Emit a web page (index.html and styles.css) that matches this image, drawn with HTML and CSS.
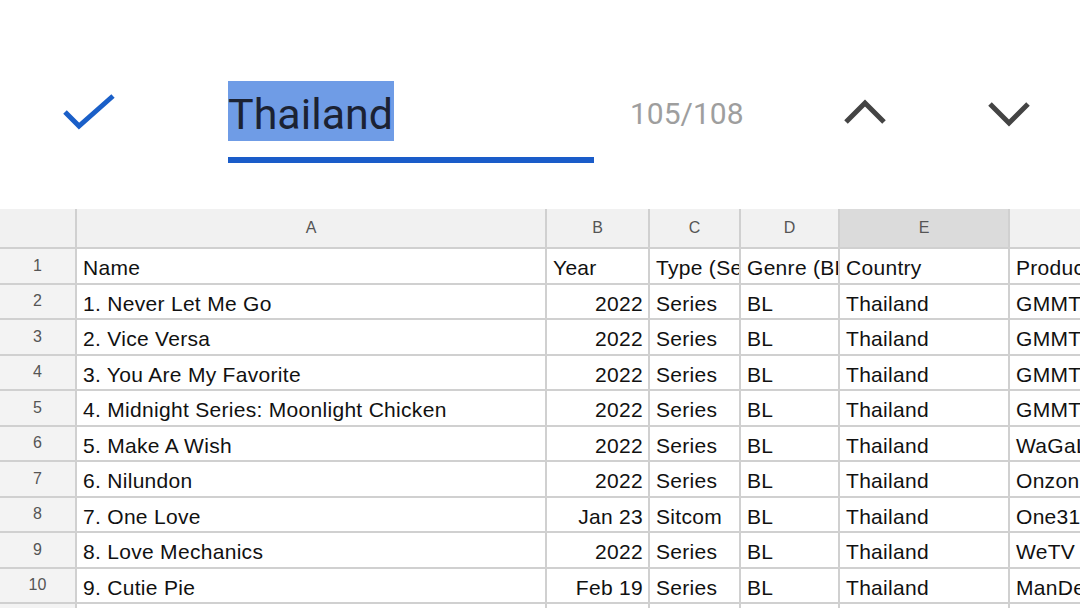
FILE: index.html
```html
<!DOCTYPE html>
<html>
<head>
<meta charset="utf-8">
<link rel="stylesheet" href="styles.css">
</head>
<body>
<div class="findbar">
  <div class="check">
    <svg width="56" height="42" viewBox="0 0 56 42"><path d="M3 19 L17 33 L51 3" fill="none" stroke="#1a5fc8" stroke-width="5"/></svg>
  </div>
  <div class="field">
    <div class="query"><span class="sel">Thailand</span></div>
    <div class="underline"></div>
  </div>
  <div class="count">105/108</div>
  <div class="nav up">
    <svg width="42" height="26" viewBox="0 0 42 26"><path d="M2 23 L21 4 L40 23" fill="none" stroke="#444" stroke-width="5"/></svg>
  </div>
  <div class="nav down">
    <svg width="42" height="26" viewBox="0 0 42 26"><path d="M2 3 L21 22 L40 3" fill="none" stroke="#444" stroke-width="5"/></svg>
  </div>
</div>
<div class="sheet">
  <div class="hd corner"></div>
  <div class="hd">A</div>
  <div class="hd">B</div>
  <div class="hd">C</div>
  <div class="hd">D</div>
  <div class="hd active">E</div>
  <div class="hd"></div>

  <div class="rn">1</div><div class="c">Name</div><div class="c">Year</div><div class="c">Type (Series/Movie)</div><div class="c">Genre (BL/GL)</div><div class="c">Country</div><div class="c">Production</div>
  <div class="rn">2</div><div class="c">1. Never Let Me Go</div><div class="c r">2022</div><div class="c">Series</div><div class="c">BL</div><div class="c">Thailand</div><div class="c">GMMTV</div>
  <div class="rn">3</div><div class="c">2. Vice Versa</div><div class="c r">2022</div><div class="c">Series</div><div class="c">BL</div><div class="c">Thailand</div><div class="c">GMMTV</div>
  <div class="rn">4</div><div class="c">3. You Are My Favorite</div><div class="c r">2022</div><div class="c">Series</div><div class="c">BL</div><div class="c">Thailand</div><div class="c">GMMTV</div>
  <div class="rn">5</div><div class="c">4. Midnight Series: Moonlight Chicken</div><div class="c r">2022</div><div class="c">Series</div><div class="c">BL</div><div class="c">Thailand</div><div class="c">GMMTV</div>
  <div class="rn">6</div><div class="c">5. Make A Wish</div><div class="c r">2022</div><div class="c">Series</div><div class="c">BL</div><div class="c">Thailand</div><div class="c">WaGaLa</div>
  <div class="rn">7</div><div class="c">6. Nilundon</div><div class="c r">2022</div><div class="c">Series</div><div class="c">BL</div><div class="c">Thailand</div><div class="c">Onzon</div>
  <div class="rn">8</div><div class="c">7. One Love</div><div class="c r">Jan 23</div><div class="c">Sitcom</div><div class="c">BL</div><div class="c">Thailand</div><div class="c">One31</div>
  <div class="rn">9</div><div class="c">8. Love Mechanics</div><div class="c r">2022</div><div class="c">Series</div><div class="c">BL</div><div class="c">Thailand</div><div class="c">WeTV</div>
  <div class="rn">10</div><div class="c">9. Cutie Pie</div><div class="c r">Feb 19</div><div class="c">Series</div><div class="c">BL</div><div class="c">Thailand</div><div class="c">ManDee</div>
  <div class="rn">11</div><div class="c">10. Bad Buddy</div><div class="c r">2021</div><div class="c">Series</div><div class="c">BL</div><div class="c">Thailand</div><div class="c">GMMTV</div>
</div>
</body>
</html>
```
FILE: styles.css
```css
html, body {
  margin: 0;
  padding: 0;
  background: #fff;
  width: 1080px;
  height: 608px;
  overflow: hidden;
}

.findbar {
  height: 209px;
  display: flex;
  align-items: flex-start;
}

.check {
  margin-left: 62px;
  margin-top: 93px;
  width: 56px;
  height: 42px;
}

.field {
  margin-left: 110px;
  margin-top: 81px;
  width: 366px;
}

.query {
  height: 60px;
  font-family: Roboto, "Noto Sans", sans-serif;
  font-size: 43px;
  color: #1b2233;
}

.sel {
  background: #6f9ce6;
  display: inline-block;
  height: 60px;
  line-height: 66px;
  overflow: hidden;
  padding-right: 1px;
  vertical-align: top;
}

.underline {
  margin-top: 16px;
  height: 6px;
  background: #1a5cc9;
}

.count {
  margin-left: 36px;
  margin-top: 96px;
  font-family: Roboto, "Noto Sans", sans-serif;
  font-size: 30px;
  line-height: 36px;
  color: #9e9e9e;
}

.nav {
  width: 42px;
  height: 26px;
}

.up {
  margin-left: 100px;
  margin-top: 99px;
}

.down {
  margin-left: 102px;
  margin-top: 101px;
}

.sheet {
  display: grid;
  grid-template-columns: 75px 468px 101px 89px 97px 168px 70px;
  grid-template-rows: 38px repeat(11, 33.5px);
  gap: 2px;
  background: #d0d0d0;
  width: 1080px;
  overflow: hidden;
  font-family: "Liberation Sans", Arial, sans-serif;
}

.hd {
  background: #f1f1f1;
  color: #555;
  font-size: 16px;
  display: flex;
  align-items: center;
  justify-content: center;
}

.hd.active {
  background: #dbdbdb;
}

.rn {
  background: #f3f3f3;
  color: #555;
  font-size: 16px;
  display: flex;
  align-items: center;
  justify-content: center;
}

.c {
  background: #fff;
  color: #111;
  font-size: 21px;
  letter-spacing: 0.3px;
  line-height: 33.5px;
  padding: 2px 5px 0 6px;
  white-space: nowrap;
  overflow: hidden;
}

.c.r {
  text-align: right;
}
```
